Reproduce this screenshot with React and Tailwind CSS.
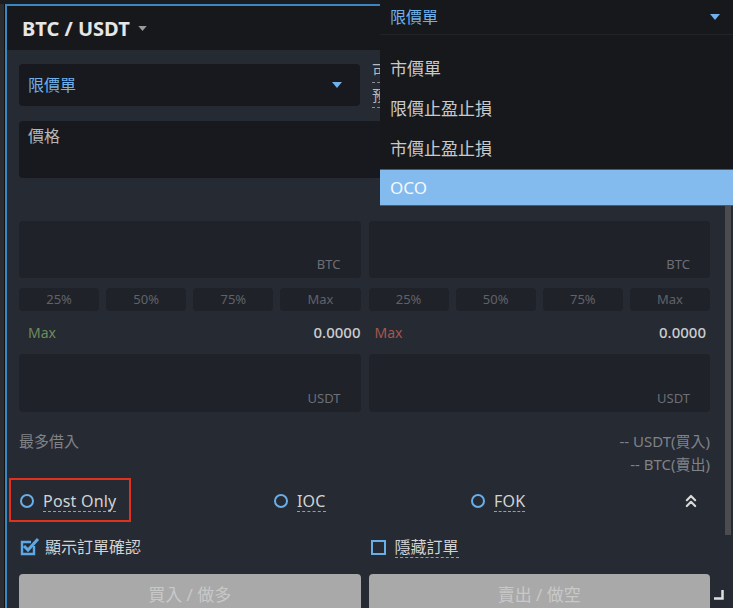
import { ChevronsUp } from 'lucide-react';

const font = { fontFamily: '"Noto Sans", "Noto Sans CJK TC", sans-serif' };

function Caret({ className }) {
  return (
    <svg viewBox="0 0 10 6" className={className}>
      <path d="M0 0 L10 0 L5 6 Z" fill="currentColor" />
    </svg>
  );
}

function AmountBox({ unit, h }) {
  return (
    <div className={`flex ${h} items-end justify-end rounded bg-[#1f2229] pb-[4px] pr-[20px] text-[13px] text-[#6c6f76]`}>
      {unit}
    </div>
  );
}

function Column({ maxColor, maxPad }) {
  return (
    <div className="flex flex-col">
      <AmountBox unit="BTC" h="h-[57px]" />
      <div className="mt-[10px] grid h-[23px] grid-cols-4 gap-[7px]">
        {['25%', '50%', '75%', 'Max'].map((p) => (
          <div
            key={p}
            className="flex items-center justify-center rounded-sm bg-[#1f2229] text-[13px] text-[#5f6269]"
          >
            {p}
          </div>
        ))}
      </div>
      <div className={`mt-[9px] flex h-[24px] items-center justify-between ${maxPad}`}>
        <span className={`text-[14px] ${maxColor}`}>Max</span>
        <span className="text-[15px] font-medium text-[#cbccce]">0.0000</span>
      </div>
      <div className="mt-[10px]">
        <AmountBox unit="USDT" h="h-[58px]" />
      </div>
    </div>
  );
}

function Radio({ label, className }) {
  return (
    <div className={`flex shrink-0 items-center gap-[9px] ${className}`}>
      <span className="h-[14px] w-[14px] rounded-full border-2 border-[#6aaee8]" />
      <span className="border-b border-dashed border-[#9a9ca0] text-[16px] leading-[20px] tracking-[0.2px] text-[#d2d3d5]">
        {label}
      </span>
    </div>
  );
}

export default function App() {
  return (
    <div
      className="relative flex h-[608px] w-[733px] flex-col overflow-hidden bg-[#1e1f22]"
      style={font}
    >
      <div className="h-[4px] shrink-0 bg-[#1b1c1f]" />
      <div className="flex min-h-0 flex-1">
        <div className="w-[5px] shrink-0 border-r border-[#111] bg-[#2c2d30]" />
        <div className="flex min-h-0 flex-1 flex-col overflow-hidden border-l-2 border-t-2 border-[#3b86c1]">
          {/* header */}
          <div className="flex h-[44px] shrink-0 items-center gap-[8px] bg-[#17181c] pl-[15px] pt-[2px]">
            <span className="text-[20px] font-bold text-[#e6e6e6]">BTC / USDT</span>
            <Caret className="mt-[-2px] h-[5px] w-[9px] text-[#9a9a9a]" />
          </div>

          {/* body */}
          <div className="relative flex-1 bg-[#262a33] pl-[12px] pr-[23px]">
            <div className="mt-[14px] flex h-[42px] items-start">
              <div className="flex h-[42px] w-[341px] items-center justify-between rounded bg-[#18191e] pl-[9px] pr-[18px]">
                <span className="text-[16px] text-[#6fb1ea]">限價單</span>
                <Caret className="h-[6px] w-[10px] text-[#6fb1ea]" />
              </div>
              <div className="ml-[12px] mt-[-6px] flex flex-col text-[15px] leading-[24px] text-[#b9babd]">
                <span className="border-b border-dashed border-[#8a8c90]">可用資金</span>
                <span className="border-b border-dashed border-[#8a8c90]">預估</span>
              </div>
            </div>

            <div className="mt-[15px] h-[57px] rounded bg-[#18191e] pl-[9px] pt-[3px] text-[16px] text-[#b5b6b9]">
              價格
            </div>

            <div className="mt-[43px] grid grid-cols-2 gap-x-[8px]">
              <Column maxColor="text-[#6e8c5c]" maxPad="pl-[9px]" />
              <Column maxColor="text-[#a5574f]" maxPad="pl-[6px] pr-[4px]" />
            </div>

            <div className="mt-[18px] flex justify-between text-[15px] leading-[23px] text-[#808287]">
              <span>最多借入</span>
              <div className="flex flex-col items-end">
                <span>-- USDT(買入)</span>
                <span>-- BTC(賣出)</span>
              </div>
            </div>

            <div className="mt-[11px] flex h-[28px] items-center pl-[1px]">
              <div className="relative w-[254px] shrink-0">
                <div className="absolute -left-[11px] -top-[13px] h-[44px] w-[122px] border-2 border-[#e2301e]" />
                <Radio label="Post Only" />
              </div>
              <Radio label="IOC" className="w-[197px]" />
              <Radio label="FOK" className="w-[210px]" />
              <ChevronsUp className="h-[20px] w-[20px] text-[#d9d9d9]" strokeWidth={2.6} />
            </div>

            <div className="mt-[18px] grid h-[28px] grid-cols-2 gap-x-[8px]">
              <div className="flex items-center gap-[5px] pl-[1px]">
                <svg viewBox="0 0 20 18" className="h-[18px] w-[20px]">
                  <path d="M14 8 V16 H2 V4 H11" fill="none" stroke="#5ea8e6" strokeWidth="2.4" />
                  <path d="M4 8 L8 12 L18 1" fill="none" stroke="#5ea8e6" strokeWidth="3" />
                </svg>
                <span className="text-[16px] text-[#d2d3d5]">顯示訂單確認</span>
              </div>
              <div className="flex items-center gap-[9px] pl-[2px]">
                <span className="h-[15px] w-[15px] border-2 border-[#6aaee8]" />
                <span className="border-b border-dashed border-[#9a9ca0] text-[16px] leading-[20px] text-[#d2d3d5]">
                  隱藏訂單
                </span>
              </div>
            </div>

            <div className="mt-[13px] grid grid-cols-2 gap-x-[8px]">
              <div className="flex h-[34px] justify-center rounded-t bg-[#a9a9a9] pt-[11px] text-[17px] leading-[20px] text-[#c8c8c8]">
                買入 / 做多
              </div>
              <div className="flex h-[34px] justify-center rounded-t bg-[#a9a9a9] pt-[11px] text-[17px] leading-[20px] text-[#c8c8c8]">
                賣出 / 做空
              </div>
            </div>

            {/* scrollbar */}
            <div className="absolute right-[2px] top-[155px] h-[330px] w-[6px] bg-[#4b4c50]" />

            {/* resize handle */}
            <svg viewBox="0 0 10 10" className="absolute bottom-[8px] right-[9px] h-[10px] w-[10px]">
              <path d="M8.5 0 V8.5 H0" fill="none" stroke="#e0e0e0" strokeWidth="2.5" />
            </svg>
          </div>
        </div>
      </div>

      {/* open dropdown */}
      <div className="absolute left-[380px] top-0 z-10 flex h-[206px] w-[353px] flex-col bg-[#17181c]">
        <div className="flex h-[35px] items-center justify-between border-b border-[#222328] pl-[10px] pr-[13px]">
          <span className="text-[16px] text-[#6fb1ea]">限價單</span>
          <Caret className="h-[6px] w-[10px] text-[#6fb1ea]" />
        </div>
        <div className="pt-[14px]">
          {['市價單', '限價止盈止損', '市價止盈止損'].map((t) => (
            <div key={t} className="flex h-[40px] items-center pl-[10px] text-[17px] text-[#c9cacc]">
              {t}
            </div>
          ))}
        </div>
        <div className="flex h-[37px] items-center border-y border-[#3c5f80] bg-[#84bbee] pl-[10px] text-[17px] text-[#f4f8fc]">
          OCO
        </div>
      </div>
    </div>
  );
}
